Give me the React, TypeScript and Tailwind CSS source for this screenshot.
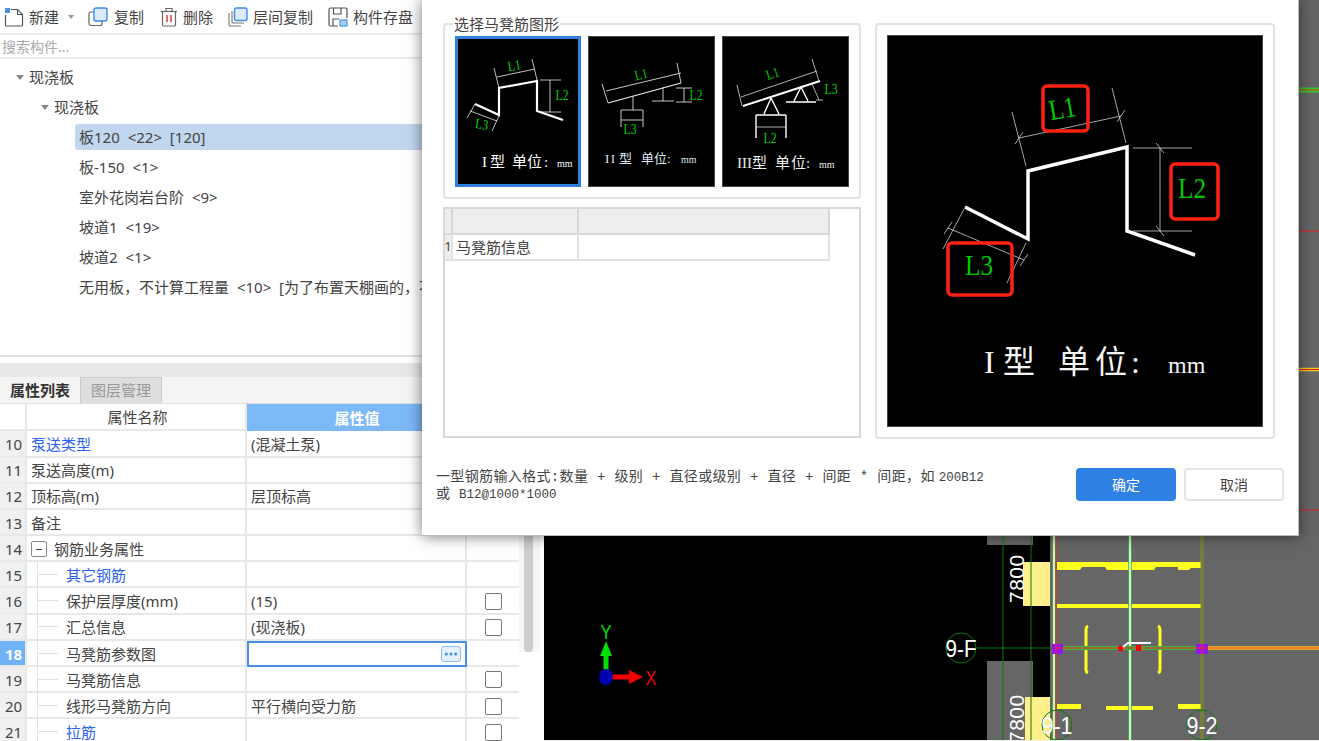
import { Ellipsis } from "lucide-react";

const rows = [
  { no: 10, name: "泵送类型", value: "(混凝土泵)", blue: true },
  { no: 11, name: "泵送高度(m)" },
  { no: 12, name: "顶标高(m)", value: "层顶标高" },
  { no: 13, name: "备注" },
  { no: 14, name: "钢筋业务属性", group: true },
  { no: 15, name: "其它钢筋", child: true, blue: true },
  { no: 16, name: "保护层厚度(mm)", value: "(15)", child: true, check: true },
  { no: 17, name: "汇总信息", value: "(现浇板)", child: true, check: true },
  { no: 18, name: "马凳筋参数图", child: true, active: true },
  { no: 19, name: "马凳筋信息", child: true, check: true },
  { no: 20, name: "线形马凳筋方向", value: "平行横向受力筋", child: true, check: true },
  { no: 21, name: "拉筋", child: true, blue: true, check: true },
];

const treeItems = [
  "板120 <22> [120]",
  "板-150 <1>",
  "室外花岗岩台阶 <9>",
  "坡道1 <19>",
  "坡道2 <1>",
  "无用板\uFF0C不计算工程量 <10> [为了布置天棚画的\uFF0C不计算工程量]",
];

function NewIcon() {
  return (
    <svg width="20" height="20" viewBox="0 0 20 20" fill="none" stroke="#555" strokeWidth="1.2">
      <path d="M7 2.5H13.5L18.5 7.5V18a1 1 0 0 1-1 1H2.5a1 1 0 0 1-1-1V8" />
      <path d="M13.5 2.5V7.5H18.5" />
      <rect x="1" y="1" width="5" height="5" fill="#4a90e2" stroke="none" />
    </svg>
  );
}

function CopyIcon() {
  return (
    <svg width="20" height="20" viewBox="0 0 20 20" fill="none">
      <rect x="1" y="5" width="13" height="13.5" rx="2" stroke="#666" strokeWidth="1.2" />
      <rect x="6" y="1" width="13" height="13" rx="2" fill="#dcebfb" stroke="#3d8be8" strokeWidth="1.4" />
    </svg>
  );
}

function TrashIcon() {
  return (
    <svg width="18" height="20" viewBox="0 0 18 20" fill="none" stroke="#666" strokeWidth="1.2">
      <path d="M1 4.5H17" />
      <path d="M6 4.5V1.5H12V4.5" />
      <path d="M2.5 4.5V17.5a1.5 1.5 0 0 0 1.5 1.5H14a1.5 1.5 0 0 0 1.5-1.5V4.5" />
      <path d="M7 8V15M11 8V15" stroke="#e03b3b" strokeWidth="1.5" />
    </svg>
  );
}

function LayerCopyIcon() {
  return (
    <svg width="20" height="20" viewBox="0 0 20 20" fill="none">
      <path d="M1 6V18a1 1 0 0 0 1 1H13" stroke="#777" strokeWidth="1.1" />
      <path d="M4 4V15a1 1 0 0 0 1 1H16" stroke="#777" strokeWidth="1.1" />
      <rect x="6.5" y="1" width="12.5" height="12.5" rx="2" fill="#dcebfb" stroke="#3d8be8" strokeWidth="1.4" />
    </svg>
  );
}

function SaveIcon() {
  return (
    <svg width="20" height="20" viewBox="0 0 20 20" fill="none" stroke="#555" strokeWidth="1.2">
      <path d="M10 19H2.5a1.5 1.5 0 0 1-1.5-1.5V2.5A1.5 1.5 0 0 1 2.5 1h15A1.5 1.5 0 0 1 19 2.5V11" />
      <path d="M5.5 1V7H13V1" />
      <path d="M5 19V12H11" />
      <rect x="12" y="13" width="7" height="6" fill="#a9d0f8" stroke="#3d8be8" strokeWidth="1.1" />
    </svg>
  );
}

function Toolbar() {
  return (
    <div className="flex items-center h-[35px] pt-[1px] border-b-2 border-[#ececec] text-[15px] text-[#444] pl-[4px]">
      <NewIcon />
      <span className="ml-[5px]">新建</span>
      <span className="ml-[9px] w-0 h-0 border-x-[3px] border-x-transparent border-t-[4px] border-t-[#999]" />
      <span className="ml-[14px]"><CopyIcon /></span>
      <span className="ml-[6px]">复制</span>
      <span className="ml-[16px]"><TrashIcon /></span>
      <span className="ml-[5px]">删除</span>
      <span className="ml-[15px]"><LayerCopyIcon /></span>
      <span className="ml-[5px]">层间复制</span>
      <span className="ml-[15px]"><SaveIcon /></span>
      <span className="ml-[5px]">构件存盘</span>
    </div>
  );
}

function Caret() {
  return <span className="w-0 h-0 border-x-[4px] border-x-transparent border-t-[5px] border-t-[#888]" />;
}

function Tree() {
  return (
    <div className="h-[298px] pt-[3px] border-b-2 border-[#e4e4e4] text-[15px] text-[#444] overflow-hidden whitespace-nowrap">
      <div className="flex items-center h-[30px] pl-[16px] gap-[5px]"><Caret />现浇板</div>
      <div className="flex items-center h-[30px] pl-[41px] gap-[5px]"><Caret />现浇板</div>
      {treeItems.map((t, i) => (
        <div key={t} className="flex items-center h-[30px] pl-[75px]">
          <div className={`flex items-center h-[26px] flex-1 pl-[4px] rounded-l-[3px] [word-spacing:4px] ${i === 0 ? "bg-[#c0d7ef]" : ""}`}>
            {t}
          </div>
        </div>
      ))}
    </div>
  );
}

function PropTable() {
  return (
    <div className="flex-1 overflow-hidden relative">
      <div className="grid grid-cols-[27px_220px_220px_52px] h-[27px] text-[15px] text-[#444]">
        <div className="border-r-2 border-b-2 border-[#e8e8e8]" />
        <div className="border-r-2 border-b-2 border-[#e8e8e8] flex items-center justify-center pl-[3px] pt-[2px]">属性名称</div>
        <div className="bg-[#7db8f7] text-white font-bold flex items-center justify-center pt-[2px]">属性值</div>
        <div className="border-b-2 border-[#e8e8e8]" />
      </div>
      {rows.map((r) => (
        <div key={r.no} className="grid grid-cols-[27px_220px_220px_52px] h-[26.2px] text-[15px] text-[#444]">
          <div className={`border-r-2 border-b-2 border-[#e8e8e8] flex items-center justify-center pl-[2px] pt-[2px] ${r.active ? "bg-[#6fb2f5] text-white font-bold" : "bg-[#f0f0f0]"}`}>
            {r.no}
          </div>
          <div className="relative border-r-2 border-b-2 border-[#e8e8e8] flex items-center whitespace-nowrap pt-[2px]">
            {r.child && (
              <>
                <span className="absolute left-[10px] -top-[1px] -bottom-[2px] w-px bg-[#e2e2e2]" />
                <span className="absolute left-[11px] top-[12px] w-[20px] h-px bg-[#e2e2e2]" />
              </>
            )}
            {r.group && (
              <span className="ml-[4px] mr-[7px] w-[16px] h-[16px] border border-[#888] rounded-[2px] flex items-center justify-center">
                <span className="w-[6px] h-px bg-[#444]" />
              </span>
            )}
            <span className={`${r.child ? "ml-[39px]" : r.group ? "" : "ml-[4px]"} ${r.blue ? "text-[#2d62ef]" : ""}`}>{r.name}</span>
          </div>
          {r.active ? (
            <div className="border-2 border-[#4a90e2] flex items-center justify-end pr-[4px]">
              <span className="w-[20px] h-[16px] rounded-[3px] border border-[#8cbcf0] bg-[#e4f0fc] flex items-center justify-center text-[#3d8be8]">
                <Ellipsis size={16} strokeWidth={2.5} />
              </span>
            </div>
          ) : (
            <div className="border-r-2 border-b-2 border-[#e8e8e8] flex items-center pl-[4px] pt-[2px] whitespace-nowrap">{r.value}</div>
          )}
          <div className="border-b-2 border-[#e8e8e8] flex items-center justify-center pl-[1px] pt-[2px]">
            {r.check && <span className="w-[17px] h-[17px] border border-[#777] rounded-[2px] bg-white" />}
          </div>
        </div>
      ))}
    </div>
  );
}

function LeftPanel() {
  return (
    <div className="w-[544px] h-full flex flex-col bg-white overflow-hidden">
      <Toolbar />
      <div className="h-[24px] border-b-2 border-[#ececec] flex items-center pl-[2px] text-[14px] text-[#aaa]">搜索构件...</div>
      <Tree />
      <div className="h-[6px]" />
      <div className="h-[14px] bg-[#e8e8e8]" />
      <div className="flex h-[27px] border-b border-[#e0e0e0] text-[15px]">
        <div className="w-[80px] flex items-center justify-center font-bold text-[#333] bg-[#f4f4f4]">属性列表</div>
        <div className="w-[82px] flex items-center justify-center text-[#999] bg-[#dedede] border-x border-t border-[#ccc]">图层管理</div>
        <div className="flex-1 bg-[#f4f4f4]" />
      </div>
      <div className="flex flex-1 min-h-0">
        <div className="w-[519px] flex flex-col"><PropTable /></div>
        <div className="w-[21px] bg-[#f6f6f6] pl-[5px] h-[248px]">
          <div className="w-[9px] h-full rounded-b-[4px] bg-[#cdcdcd]" />
        </div>
      </div>
    </div>
  );
}

function CadCanvas() {
  const yellowTop = "M1057 562H1201V568H1191L1189 570H1178V567H1156L1154 570H1107L1105 567H1082L1080 570H1057Z";
  return (
    <div className="flex-1 h-[740px] bg-black overflow-hidden">
      <svg width="775" height="740" viewBox="544 0 775 740" fontFamily="Liberation Sans, sans-serif">
        <rect x="1050" y="0" width="269" height="740" fill="#666666" />
        <rect x="987" y="530" width="46" height="15" fill="#666666" />
        <rect x="987" y="661" width="46" height="80" fill="#666666" />
        <rect x="1023" y="562" width="27" height="44" fill="#fff08c" />
        <rect x="1025" y="697" width="25" height="44" fill="#fff08c" />
        <path d="M1003 530V741M1031 530V741" stroke="#0d7a0d" strokeWidth="1" />
        <path d={yellowTop} fill="#ffff1e" />
        <rect x="1057" y="604" width="144" height="4" fill="#ffff1e" />
        <path d="M1057 704H1081V709H1057ZM1106 706H1153V710H1106ZM1178 704H1201V709H1178Z" fill="#ffff1e" />
        <path d="M1088 626Q1086 627 1086 630V670Q1086 672 1088 673M1158 626Q1160 627 1160 630V670Q1160 672 1158 673" stroke="#ffff1e" strokeWidth="3" fill="none" />
        <path d="M1054 0V741M1130 0V741" stroke="#3fb53f" strokeWidth="3.5" />
        <path d="M1054 0V741M1130 0V741" stroke="#ffffff" strokeWidth="1.5" />
        <path d="M1202 0V741" stroke="#3fb53f" strokeWidth="3" />
        <path d="M977 648H1057" stroke="#0d7a0d" strokeWidth="1" />
        <path d="M1057 648H1202" stroke="#3fb53f" strokeWidth="4" />
        <path d="M1202 648H1319" stroke="#f0d020" strokeWidth="3.5" />
        <rect x="1052" y="644" width="11" height="10" fill="#9018ee" />
        <rect x="1196" y="644" width="12" height="10" fill="#9018ee" />
        <path d="M1056 0V741M1202 0V741" stroke="#ff2020" strokeWidth="1" />
        <path d="M1056 648H1319" stroke="#ff2020" strokeWidth="1.2" />
        <path d="M1299 90H1319" stroke="#2ecc2e" strokeWidth="5" />
        <path d="M1299 90H1319" stroke="#ff2020" strokeWidth="1" />
        <path d="M1299 231H1319M1299 510H1319" stroke="#e02020" strokeWidth="1.2" />
        <path d="M1299 369.5H1319" stroke="#f0d020" strokeWidth="3.5" />
        <path d="M1299 369.5H1319" stroke="#e02020" strokeWidth="1" />
        <rect x="1118" y="646" width="5" height="5" fill="#ff0000" />
        <rect x="1136" y="645" width="5" height="6" fill="#ff0000" />
        <path d="M1123 647L1128 643H1151" stroke="#fff" strokeWidth="2" fill="none" />
        <text transform="translate(1024 603) rotate(-90)" fontSize="21" fill="#fff" letterSpacing="0.5">7800</text>
        <text transform="translate(1024 743) rotate(-90)" fontSize="21" fill="#fff" letterSpacing="0.5">7800</text>
        <ellipse cx="961" cy="648" rx="15" ry="15" fill="none" stroke="#0d7a0d" />
        <ellipse cx="1057" cy="725" rx="15" ry="15" fill="none" stroke="#0d7a0d" />
        <ellipse cx="1202" cy="725" rx="15" ry="15" fill="none" stroke="#0d7a0d" />
        <text x="961" y="657" fontSize="24" fill="#fff" textAnchor="middle" textLength="31" lengthAdjust="spacingAndGlyphs">9-F</text>
        <text x="1057" y="734" fontSize="24" fill="#fff" textAnchor="middle" textLength="31" lengthAdjust="spacingAndGlyphs">9-1</text>
        <text x="1202" y="734" fontSize="24" fill="#fff" textAnchor="middle" textLength="31" lengthAdjust="spacingAndGlyphs">9-2</text>
        <path d="M606 677V656" stroke="#00e000" strokeWidth="5" />
        <path d="M606 641L612 656H600Z" fill="#00e000" />
        <path d="M606 677H631" stroke="#f00000" strokeWidth="5" />
        <path d="M643 677L629 670V684Z" fill="#f00000" />
        <ellipse cx="606" cy="677" rx="7" ry="8" fill="#0000b0" />
        <text x="606" y="639" fontSize="20" fill="#00e000" textAnchor="middle" textLength="11" lengthAdjust="spacingAndGlyphs">Y</text>
        <text x="651" y="685" fontSize="20" fill="#f00000" textAnchor="middle" textLength="11" lengthAdjust="spacingAndGlyphs">X</text>
      </svg>
    </div>
  );
}

const serif = "Liberation Serif, Noto Sans CJK SC, serif";

function SmallLabel({ x, y, angle = 0, children }: { x: number; y: number; angle?: number; children: string }) {
  return (
    <text x={x} y={y} fontSize="14" fill="#00d000" textAnchor="middle" textLength="13" lengthAdjust="spacingAndGlyphs" transform={`rotate(${angle} ${x} ${y})`}>
      {children}
    </text>
  );
}

function Thumb1() {
  return (
    <svg width="120" height="145" viewBox="3 3 120 145" fontFamily={serif} className="block">
      <path d="M20 68L44 79V52L82 45V75L108 84" fill="none" stroke="#fff" strokeWidth="2.2" />
      <path d="M42 41L80 33M39 32L44 52M77 23L82 44M85 44H106M85 76H106M95 44V76M15 75L42 85M20 68L12 82M44 80L37 95" stroke="#eee" strokeWidth="0.8" />
      <SmallLabel x={60} y={34} angle={-10}>L1</SmallLabel>
      <SmallLabel x={107} y={64}>L2</SmallLabel>
      <SmallLabel x={26} y={93} angle={10}>L3</SmallLabel>
      <text y="131" fontSize="15" fill="#fff">
        <tspan x="27">I</tspan><tspan x="35">型</tspan><tspan x="57">单</tspan><tspan x="72">位</tspan><tspan x="89">:</tspan>
        <tspan x="102" fontSize="10">mm</tspan>
      </text>
    </svg>
  );
}

function Thumb2() {
  return (
    <svg width="127" height="151" viewBox="0 0 127 151" fontFamily={serif} className="block">
      <path d="M19 66L92 46" stroke="#eee" strokeWidth="1.2" />
      <path d="M17 54L92 36M13 47L19 66M88 26L92 46M44 59V73M32 73H54M32 73V90M54 73V90M32 83H54M74 50V64M63 64H85M87 51H103M87 65H103M95 51V65" stroke="#ddd" strokeWidth="0.9" />
      <SmallLabel x={53} y={42} angle={-13}>L1</SmallLabel>
      <SmallLabel x={107} y={63}>L2</SmallLabel>
      <SmallLabel x={41} y={97}>L3</SmallLabel>
      <text y="126" fontSize="13" fill="#dfe8f5">
        <tspan x="16" letterSpacing="1.5">II</tspan><tspan x="30">型</tspan><tspan x="52">单</tspan><tspan x="65">位</tspan><tspan x="78">:</tspan>
        <tspan x="92" fontSize="10">mm</tspan>
      </text>
    </svg>
  );
}

function Thumb3() {
  return (
    <svg width="127" height="151" viewBox="0 0 127 151" fontFamily={serif} className="block">
      <path d="M20 69L97 44" stroke="#fff" strokeWidth="2" />
      <path d="M48 61L41 77M48 61L56 77M33 78H63M33 78V101M63 78V101M63 65H93M71 64L78 50L85 64" stroke="#fff" strokeWidth="1.4" fill="none" />
      <path d="M18 60L94 34M14 48L19 69M89 22L96 44M33 90H63M89 47L96 63M93 63H100" stroke="#ddd" strokeWidth="0.8" />
      <SmallLabel x={51} y={41} angle={-18}>L1</SmallLabel>
      <SmallLabel x={47} y={106}>L2</SmallLabel>
      <SmallLabel x={108} y={57}>L3</SmallLabel>
      <text y="131" fontSize="15" fill="#eee">
        <tspan x="14">III</tspan><tspan x="29">型</tspan><tspan x="52">单</tspan><tspan x="68">位</tspan><tspan x="83">:</tspan>
        <tspan x="96" fontSize="10">mm</tspan>
      </text>
    </svg>
  );
}

function BigPreview() {
  return (
    <svg width="376" height="392" viewBox="0 0 376 392" fontFamily={serif} className="block">
      <path d="M77 171L140 203V135L239 111V195L307 219" fill="none" stroke="#fff" strokeWidth="3.5" />
      <path d="M131 102L233 80M124 76L138 130M224 52L238 107M245 112H304M245 195H304M272 112V195M60 192L136 224M76 173L55 213M138 207L119 247M127 108L135 96M229 86L237 74M268 107L276 117M268 190L276 200M56 198L64 186M132 230L140 218" stroke="#cfcfcf" strokeWidth="0.8" />
      <rect x="155" y="50" width="45" height="45" rx="4" fill="none" stroke="#ff2010" strokeWidth="3.5" />
      <rect x="283" y="128" width="47" height="55" rx="4" fill="none" stroke="#ff2010" strokeWidth="3.5" />
      <rect x="60" y="207" width="64" height="52" rx="4" fill="none" stroke="#ff2010" strokeWidth="3.5" />
      <text x="176" y="82" fontSize="29" fill="#00c800" textAnchor="middle" textLength="27" lengthAdjust="spacingAndGlyphs" transform="rotate(-10 176 82)">L1</text>
      <text x="304" y="162" fontSize="29" fill="#00c800" textAnchor="middle" textLength="28" lengthAdjust="spacingAndGlyphs">L2</text>
      <text x="91" y="239" fontSize="29" fill="#00c800" textAnchor="middle" textLength="28" lengthAdjust="spacingAndGlyphs">L3</text>
      <text y="337" fontSize="32" fill="#f4f4f4">
        <tspan x="96">I</tspan><tspan x="115">型</tspan><tspan x="170">单</tspan><tspan x="207">位</tspan><tspan x="243">:</tspan>
        <tspan x="280" fontSize="24">mm</tspan>
      </text>
    </svg>
  );
}

function Dialog() {
  return (
    <div className="absolute left-[422px] top-0 w-[877px] h-[536px] bg-white shadow-[0_0_14px_rgba(0,0,0,0.55)] border-r border-b border-[#bbb] text-[15px] text-[#444]">
      <div className="flex pt-[23px] pl-[21px]">
        <div className="w-[418px] flex flex-col gap-[8px]">
          <div className="relative h-[176px] border-2 border-[#e2e2e2] rounded-[4px] flex gap-[7px] pl-[10px] pt-[11px]">
            <span className="absolute left-[8px] -top-[11px] bg-white px-[1px] leading-[20px] whitespace-nowrap">选择马凳筋图形</span>
            <div className="w-[126px] h-[151px] bg-black border-[3px] border-[#2e7fe0]"><Thumb1 /></div>
            <div className="w-[127px] h-[151px] bg-black border border-[#444]"><Thumb2 /></div>
            <div className="w-[127px] h-[151px] bg-black border border-[#444]"><Thumb3 /></div>
          </div>
          <div className="h-[231px] border-2 border-[#d8d8d8]">
            <div className="w-[385px]">
              <div className="grid grid-cols-[8px_126px_251px] h-[26px] bg-[#eeeeee]">
                <div className="border-r-2 border-b-2 border-[#d8d8d8]" />
                <div className="border-r-2 border-b-2 border-[#d8d8d8]" />
                <div className="border-r-2 border-b-2 border-[#d8d8d8]" />
              </div>
              <div className="grid grid-cols-[8px_126px_251px] h-[26px]">
                <div className="bg-[#eeeeee] border-r-2 border-b-2 border-[#e2e2e2] flex items-center justify-center text-[13px]">1</div>
                <div className="border-r-2 border-b-2 border-[#e2e2e2] flex items-center pl-[3px] whitespace-nowrap">马凳筋信息</div>
                <div className="border-r-2 border-b-2 border-[#e2e2e2]" />
              </div>
            </div>
          </div>
        </div>
        <div className="ml-[14px] w-[400px] h-[416px] border-2 border-[#e2e2e2] rounded-[4px] pl-[10px] pt-[10px]">
          <div className="w-[376px] h-[392px] bg-black border border-[#444]"><BigPreview /></div>
        </div>
      </div>
      <div className="flex mt-[30px] pl-[14px]">
        <div className="w-[640px] h-[36px] font-['Liberation_Mono','Noto_Sans_CJK_SC',monospace] text-[14px] leading-[17px] text-[#444] tracking-[0.35px]">
          <p className="whitespace-nowrap h-[17px]">
            {"一型钢筋输入格式:数量 + 级别 + 直径或级别 + 直径 + 间距 * 间距\uFF0C如"}
            <span className="ml-[4px] text-[12.5px] tracking-normal">200B12</span>
          </p>
          <p className="whitespace-nowrap h-[17px]">或 <span className="text-[12.5px] tracking-normal">B12@1000*1000</span></p>
        </div>
        <div className="flex gap-[8px] -mt-[1px]">
          <button className="w-[100px] h-[33px] bg-[#2e80e3] text-white rounded-[4px] text-[14px]">确定</button>
          <button className="w-[100px] h-[33px] bg-white border-2 border-[#e4e4e4] rounded-[4px] text-[14px] text-[#444]">取消</button>
        </div>
      </div>
    </div>
  );
}

export default function App() {
  return (
    <div className="relative w-[1319px] h-[741px] overflow-hidden flex bg-[#f0f0f0] font-['Noto_Sans','Noto_Sans_CJK_SC',sans-serif]">
      <LeftPanel />
      <CadCanvas />
      <Dialog />
    </div>
  );
}
